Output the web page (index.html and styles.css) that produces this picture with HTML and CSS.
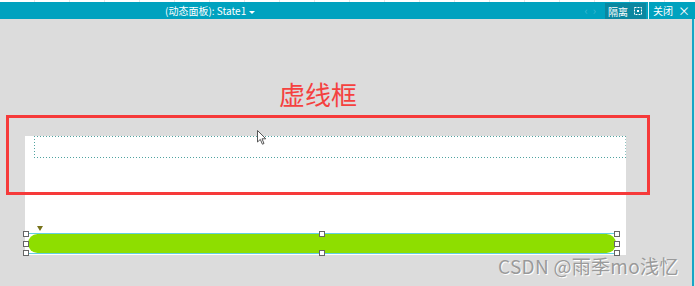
FILE: index.html
```html
<!DOCTYPE html>
<html lang="zh">
<head>
    <meta charset="UTF-8">
    <title>虚线框</title>
    <link rel="stylesheet" href="styles.css">
</head>
<body>
<div class="strip"></div>
<div class="bar">
    <span class="panel-name">(动态面板): State1 <i class="caret"></i></span>
    <span class="nav">&lsaquo;&nbsp;&nbsp;&rsaquo;</span>
    <span class="isolate">隔离 <svg width="8" height="8" viewBox="0 0 8 8"><rect x="0.5" y="0.5" width="7" height="7" fill="none" stroke="#fff" stroke-dasharray="2 1"/><rect x="3" y="3" width="2" height="2" fill="#fff"/></svg></span>
    <span class="sep"></span>
    <span class="close">关闭 <b>&times;</b></span>
</div>
<div class="workspace">
    <div class="stage">
        <h1 class="title">虚线框</h1>
        <div class="canvas">
            <div class="dotted"></div>
            <div class="marker"></div>
            <div class="bar-wrap">
                <div class="green"></div>
                <span class="h h1"></span><span class="h h2"></span><span class="h h3"></span>
                <span class="h h4"></span><span class="h h5"></span>
                <span class="h h6"></span><span class="h h7"></span><span class="h h8"></span>
            </div>
        </div>
        <div class="redbox"></div>
        <svg class="cursor" width="10" height="16" viewBox="0 0 10 16"><path d="M0.5 0.5 L0.5 12 L3.3 9.4 L5.4 14.2 L7 13.5 L5 8.8 L8.8 8.8 Z" fill="#fff" stroke="#555" stroke-width="1"/></svg>
        <div class="watermark">CSDN @雨季mo浅忆</div>
    </div>
    <div class="edge"></div>
</div>
</body>
</html>
```
FILE: styles.css
```css
body, h1 {
    margin: 0; padding: 0;
}
body {
    background: #dcdcdc;
    font-family: "Noto Sans CJK SC", "Noto Sans", sans-serif;
    height: 286px; overflow: hidden;
}
.strip {
    height: 2px;
    background: repeating-linear-gradient(90deg, #fff 0, #fff 34px, #e6e6e6 34px, #e6e6e6 35px);
}
.bar {
    height: 17px; background: #00a2bf; color: #fff;
    display: flex; align-items: center;
    font-size: 10px; line-height: 17px;
}
.panel-name {
    margin-left: 165px;
}
.caret {
    display: inline-block; width: 0; height: 0; vertical-align: middle; margin-left: 1px;
    border-left: 3px solid transparent; border-right: 3px solid transparent; border-top: 3px solid #fff;
}
.nav {
    margin-left: auto; color: #3fbad1; font-size: 11px; margin-right: 9px;
}
.isolate {
    background: #0b87a0; height: 16px; margin-top: 1px; padding: 0 4px 0 3px;
    display: flex; align-items: center; gap: 6px;
}
.sep {
    width: 1px; height: 17px; background: #e6f6fa; margin-left: 2px;
}
.close {
    margin: 0 5px 0 4px; display: flex; align-items: center; gap: 5px;
}
.close b {
    font-weight: normal; font-size: 12px;
}
.workspace {
    display: flex; height: 267px;
}
.stage {
    flex: 1; position: relative;
}
.edge {
    width: 2px; background: #17a6c6; margin-right: 1px;
}
.title {
    margin-top: 60px; height: 30px;
    font-size: 26px; line-height: 30px; font-weight: normal;
    color: #f5413f; padding-left: 279px;
}
.canvas {
    margin: 27px 0 0 25px; width: 601px; height: 119px; background: #fff;
    display: flex; flex-direction: column;
}
.dotted {
    margin-left: 9px; height: 22px;
    background:
        repeating-linear-gradient(90deg, #4fa3a0 0 1px, transparent 1px 3px) left top / 100% 1px no-repeat,
        repeating-linear-gradient(90deg, #4fa3a0 0 1px, transparent 1px 3px) left bottom / 100% 1px no-repeat,
        repeating-linear-gradient(180deg, #4fa3a0 0 1px, transparent 1px 3px) left top / 1px 100% no-repeat,
        repeating-linear-gradient(180deg, #8fc6c4 0 1px, transparent 1px 3px) right top / 1px 100% no-repeat;
}
.marker {
    margin: 68px 0 0 12px; width: 0; height: 0;
    border-left: 3px solid transparent; border-right: 3px solid transparent; border-top: 5px solid #77731a;
}
.bar-wrap {
    position: relative; margin: 2px 9px 0 1px; height: 19px;
    border-top: 1px solid #63cfe0; border-bottom: 1px solid #63cfe0;
}
.green {
    height: 19px; margin: 0 1px 0 2px; background: #8ede00; border-radius: 10px;
}
.h {
    position: absolute; width: 4px; height: 4px; background: #fff; border: 1px solid #666;
}
.h1 { left: -3px; top: -3px; }
.h2 { left: -3px; top: 7px; }
.h3 { left: -3px; top: 16px; }
.h4 { left: 293px; top: -3px; }
.h5 { left: 293px; top: 16px; }
.h6 { right: -3px; top: -3px; }
.h7 { right: -3px; top: 7px; }
.h8 { right: -3px; top: 16px; }
.redbox {
    position: absolute; left: 6px; top: 96px; width: 638px; height: 74px;
    border: 3px solid #f63a3a;
}
.cursor {
    position: absolute; left: 257px; top: 111px;
}
.watermark {
    position: absolute; left: 498px; top: 236px;
    font-size: 19px; line-height: 22px; color: #9a9a9a; letter-spacing: 0.3px;
    text-shadow: 1px 1px 0 #fff;
}
```
